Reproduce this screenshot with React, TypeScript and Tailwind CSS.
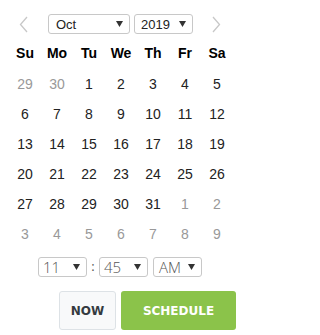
import React from "react";

const weeks: { d: number; muted?: boolean }[][] = [
  [{ d: 29, muted: true }, { d: 30, muted: true }, { d: 1 }, { d: 2 }, { d: 3 }, { d: 4 }, { d: 5 }],
  [{ d: 6 }, { d: 7 }, { d: 8 }, { d: 9 }, { d: 10 }, { d: 11 }, { d: 12 }],
  [{ d: 13 }, { d: 14 }, { d: 15 }, { d: 16 }, { d: 17 }, { d: 18 }, { d: 19 }],
  [{ d: 20 }, { d: 21 }, { d: 22 }, { d: 23 }, { d: 24 }, { d: 25 }, { d: 26 }],
  [{ d: 27 }, { d: 28 }, { d: 29 }, { d: 30 }, { d: 31 }, { d: 1, muted: true }, { d: 2, muted: true }],
  [3, 4, 5, 6, 7, 8, 9].map((d) => ({ d, muted: true })),
];

const days = ["Su", "Mo", "Tu", "We", "Th", "Fr", "Sa"];

const Caret: React.FC = () => (
  <svg width="7" height="6" viewBox="0 0 7 6" className="shrink-0">
    <path d="M0 0 H7 L3.5 6 Z" fill="#333" />
  </svg>
);

const FakeSelect: React.FC<{ value: string; className: string; font?: string }> = ({
  value,
  className,
  font = "text-[13px] text-[#222]",
}) => (
  <div
    className={`flex items-center justify-between border border-[#c8c8c8] rounded-[3px] bg-white ${className}`}
  >
    <span className={`leading-none ${font}`}>{value}</span>
    <Caret />
  </div>
);

const App: React.FC = () => {
  return (
    <div
      className="w-[240px] h-[335px] bg-white overflow-hidden"
      style={{ fontFamily: '"Liberation Sans", Arial, sans-serif' }}
    >
      <div className="flex items-center h-[20px] mt-[14px]">
        <svg width="9" height="17" viewBox="0 0 9 17" className="ml-[19px]">
          <path d="M8 1 L1.5 8.5 L8 16" fill="none" stroke="#c8c8c8" strokeWidth="1.3" />
        </svg>
        <FakeSelect value="Oct" className="ml-[20px] w-[82px] h-[20px] pl-[7px] pr-[6px]" />
        <FakeSelect value="2019" className="ml-[4px] w-[59px] h-[20px] pl-[6px] pr-[6px]" />
        <svg width="9" height="17" viewBox="0 0 9 17" className="ml-[19px]">
          <path d="M1 1 L7.5 8.5 L1 16" fill="none" stroke="#c8c8c8" strokeWidth="1.3" />
        </svg>
      </div>

      <div className="mx-[9px] mt-[4px] grid grid-cols-7 w-[224px]">
        {days.map((d) => (
          <div key={d} className="h-[30px] flex items-center justify-center text-[14px] font-bold text-black">
            {d}
          </div>
        ))}
      </div>

      <div className="mx-[9px] mt-[1px] w-[224px]">
        {weeks.map((w, i) => (
          <div key={i} className="grid grid-cols-7">
            {w.map((c, j) => (
              <div
                key={j}
                className={`h-[30px] flex items-center justify-center text-[14px] ${
                  c.muted ? "text-[#999]" : "text-[#222]"
                }`}
              >
                {c.d}
              </div>
            ))}
          </div>
        ))}
      </div>

      <div
        className="flex items-center justify-center mt-[8px] h-[20px]"
        style={{ fontFamily: '"Open Sans", sans-serif' }}
      >
        <FakeSelect value="11" className="w-[49px] h-[20px] pl-[4px] pr-[6px]" font="text-[15px] text-[#555] font-light" />
        <span className="w-[12px] text-center text-[13px] text-[#555]">:</span>
        <FakeSelect value="45" className="w-[49px] h-[20px] pl-[4px] pr-[6px]" font="text-[15px] text-[#555] font-light" />
        <FakeSelect value="AM" className="ml-[5px] w-[49px] h-[20px] pl-[5px] pr-[6px]" font="text-[15px] text-[#555] font-light" />
      </div>

      <div
        className="flex justify-end gap-[5px] mt-[14px] mr-[4px]"
        style={{ fontFamily: '"DejaVu Sans", sans-serif' }}
      >
        <button className="w-[57px] h-[39px] rounded-[3px] border border-[#dde2e6] bg-[#f8f9fa] text-[12px] font-bold text-[#343a40]">
          NOW
        </button>
        <button className="w-[115px] h-[39px] rounded-[3px] bg-[#8bc34a] text-[12px] font-bold text-white">
          SCHEDULE
        </button>
      </div>
    </div>
  );
};

export default App;
